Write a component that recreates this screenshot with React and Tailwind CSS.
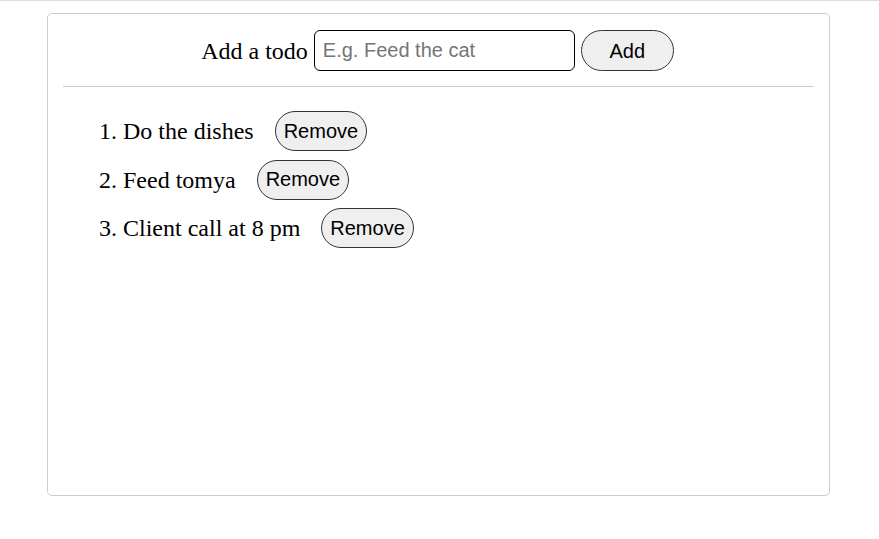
import { useState } from "react";

function App() {
  const [todos, setTodos] = useState(["Do the dishes", "Feed tomya", "Client call at 8 pm"]);
  const [text, setText] = useState("");

  const addTodo = () => {
    if (!text.trim()) return;
    setTodos([...todos, text]);
    setText("");
  };

  const removeTodo = (index) => {
    setTodos(todos.filter((_, i) => i !== index));
  };

  return (
    <div className="min-h-screen bg-white border-t border-[#dcdcdc]">
      <div className="ml-[47px] mt-3 w-[783px] h-[483px] border border-[#cccccc] rounded-[5px] pt-4 px-[15px]">
        <div className="flex items-center justify-center gap-[6px] pr-[2px]">
          <span className="text-[24px] text-black font-['Liberation_Serif',serif]">Add a todo</span>
          <input
            type="text"
            value={text}
            onChange={(e) => setText(e.target.value)}
            placeholder="E.g. Feed the cat"
            className="w-[261px] h-[41px] border border-black rounded-md px-2 text-[20px] font-['Liberation_Sans',sans-serif] placeholder:text-[#757575] outline-none"
          />
          <button
            onClick={addTodo}
            className="w-[93px] h-[41px] rounded-full border border-[#333] bg-[#efefef] text-[20px] text-black font-['Liberation_Sans',sans-serif]"
          >
            Add
          </button>
        </div>

        <div className="mt-[15px] border-t border-[#cccccc]"></div>

        <ol className="mt-6 flex flex-col gap-[8.5px] font-['Liberation_Serif',serif] text-[24px] text-black">
          {todos.map((todo, i) => (
            <li key={i} className="flex items-center h-10 pl-9">
              <span className="w-6">{i + 1}.</span>
              <span>{todo}</span>
              <button
                onClick={() => removeTodo(i)}
                className="ml-[21px] h-10 px-2 rounded-full border border-[#333] bg-[#efefef] text-[20px] leading-[23px] font-['Liberation_Sans',sans-serif]"
              >
                Remove
              </button>
            </li>
          ))}
        </ol>
      </div>
    </div>
  );
}

export default App;
